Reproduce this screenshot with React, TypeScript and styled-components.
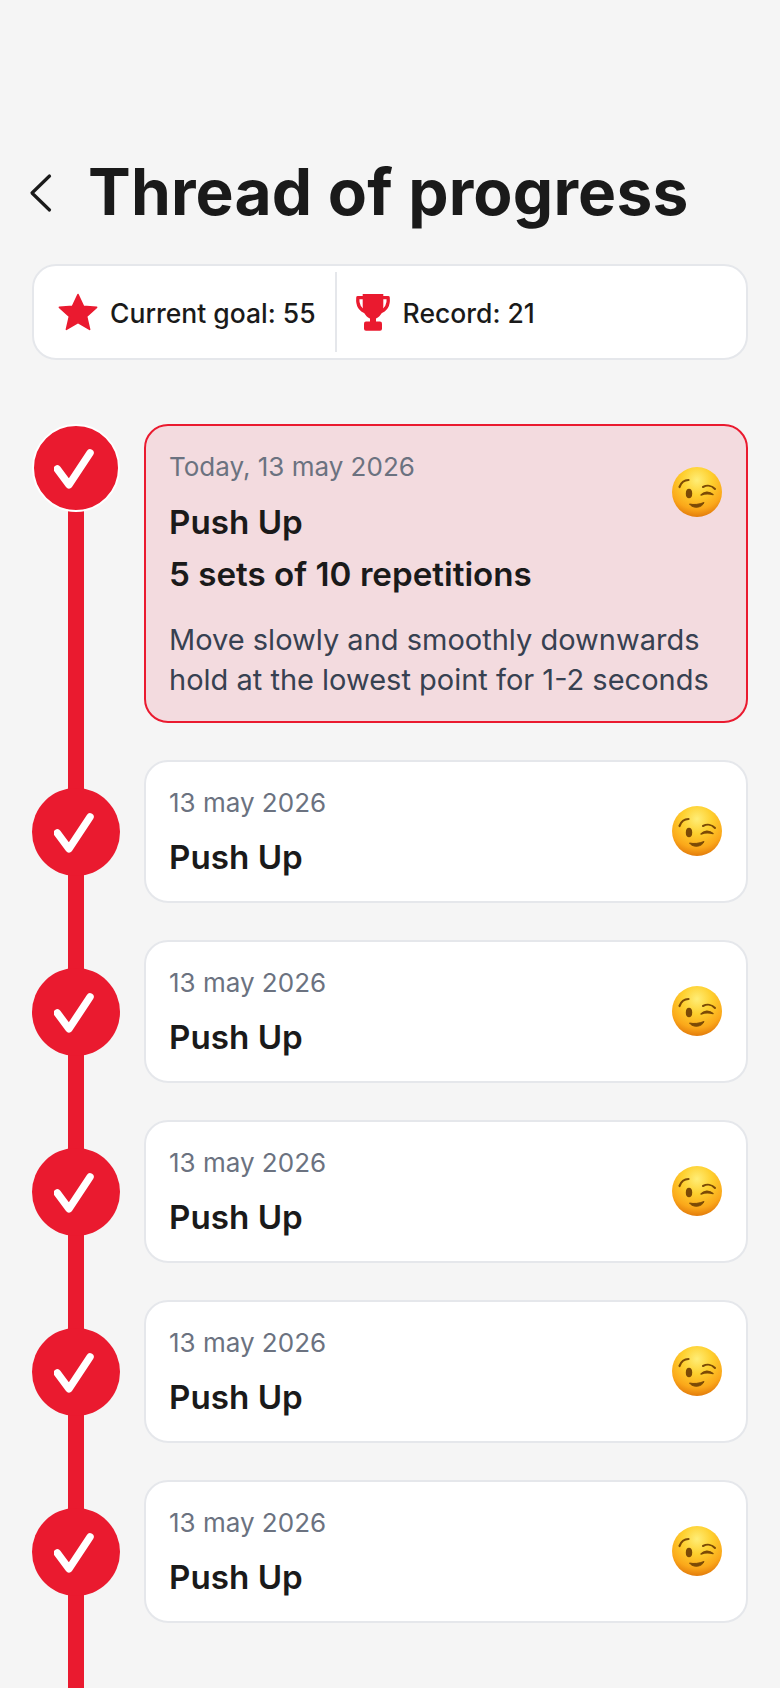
import React from "react";
import styled, { createGlobalStyle } from "styled-components";

const RED = "#ea1a2f";

const Global = createGlobalStyle`
  html, body { margin: 0; padding: 0; background: #f5f5f5; }
  body { font-family: Inter, "Liberation Sans", sans-serif; color: #1a1a1a; }
  * { box-sizing: border-box; }
`;

const Page = styled.div`
  width: 780px;
  height: 1688px;
  overflow: hidden;
  padding: 153px 32px 0;
  display: flex;
  flex-direction: column;
`;

const Header = styled.header`
  display: flex;
  align-items: center;
  height: 79px;
  gap: 35px;
`;

const BackButton = styled.button`
  display: flex;
  width: 24px;
  margin-left: -3px;
  padding: 0;
  border: 0;
  background: none;
  color: #1a1a1a;
`;

const Title = styled.h1`
  margin: 0;
  padding-bottom: 2px;
  font-size: 64px;
  line-height: 77px;
  font-weight: 700;
  letter-spacing: 0.18px;
  white-space: nowrap;
`;

const StatsBar = styled.section`
  margin-top: 32px;
  height: 96px;
  background: #fff;
  border: 2px solid #e5e7eb;
  border-radius: 24px;
  display: flex;
  align-items: center;
  padding: 6px 0;
`;

const Stat = styled.div`
  height: 100%;
  display: flex;
  align-items: center;
  gap: 12px;
  padding: 0 19px 0 24px;
  & + & {
    border-left: 2px solid #e5e7eb;
    padding-left: 18px;
  }
`;

const StatLabel = styled.span`
  font-size: 26.5px;
  font-weight: 500;
  white-space: nowrap;
  padding-top: 1px;
`;

const Timeline = styled.ol`
  position: relative;
  list-style: none;
  margin: 64px 0 0;
  padding: 0;
  display: flex;
  flex-direction: column;
  gap: 37px;
  flex: 1;
  &::before {
    content: "";
    position: absolute;
    left: 36px;
    top: 44px;
    bottom: 0;
    width: 16px;
    background: ${RED};
  }
`;

const Row = styled.li`
  position: relative;
  display: grid;
  grid-template-columns: 112px 1fr;
  align-items: center;
`;

const MarkerCell = styled.div<{ $current?: boolean }>`
  display: flex;
  justify-content: center;
  width: 88px;
  align-self: ${(p) => (p.$current ? "start" : "center")};
`;

const Marker = styled.div<{ $current?: boolean }>`
  width: 88px;
  height: 88px;
  border-radius: 50%;
  background: ${RED};
  border: ${(p) => (p.$current ? "2px solid #fff" : "0")};
  display: flex;
  align-items: center;
  justify-content: center;
`;

const Card = styled.article<{ $current?: boolean }>`
  position: relative;
  min-height: 143px;
  border-radius: 24px;
  border: 2px solid ${(p) => (p.$current ? RED : "#e5e7eb")};
  background: ${(p) => (p.$current ? "#f3dbdf" : "#fff")};
  padding: 25px 22px ${(p) => (p.$current ? "21px" : "0")} 23px;
`;

const CardDate = styled.div`
  font-size: 26px;
  line-height: 32px;
  font-weight: 400;
  color: #6b7280;
`;

const CardTitle = styled.div<{ $current?: boolean }>`
  font-size: 33.2px;
  line-height: 52px;
  font-weight: 600;
  margin-top: ${(p) => (p.$current ? 13 : 12)}px;
  color: #1a1a1a;
`;

const Note = styled.p`
  margin: 20px 0 0;
  font-size: 29px;
  line-height: 40px;
  color: #374151;
  white-space: nowrap;
`;

const EmojiSlot = styled.div<{ $current?: boolean }>`
  position: absolute;
  right: 23px;
  top: ${(p) => (p.$current ? 40 : 43)}px;
  width: 52px;
  height: 52px;
`;

const Check = () => (
  <svg width="44" height="44" viewBox="0 0 44 44" fill="none">
    <path d="M3.3 23 L15 38.7 L36 7" stroke="#fff" strokeWidth="7.5" strokeLinecap="round" strokeLinejoin="round" />
  </svg>
);

const Back = () => (
  <svg width="24" height="40" viewBox="0 0 24 40" fill="none">
    <path d="M20.5 3 L3 20 L20.5 37" stroke="currentColor" strokeWidth="3.2" strokeLinecap="round" strokeLinejoin="round" />
  </svg>
);

const Star = () => (
  <svg width="40" height="38" viewBox="0 0 40 38">
    <path
      d="M20 1.5 L25.4 13.2 L38.6 14.4 L28.6 23.4 L31.6 36.4 L20 29.6 L8.4 36.4 L11.4 23.4 L1.4 14.4 L14.6 13.2 Z"
      fill={RED}
      stroke={RED}
      strokeWidth="1.6"
      strokeLinejoin="round"
    />
  </svg>
);

const Trophy = () => (
  <svg width="36" height="38" viewBox="0 0 36 38" fill="none">
    <path d="M7.7 1 H28.3 V13 C28.3 21 23.5 24.5 21 25.4 V29 H15 V25.4 C12.5 24.5 7.7 21 7.7 13 Z" fill={RED} />
    <path d="M8 4.6 H2.8 C2.2 11.5 4.5 17 11.5 19 M28 4.6 H33.2 C33.8 11.5 31.5 17 24.5 19" stroke={RED} strokeWidth="3.2" strokeLinejoin="round" />
    <rect x="9" y="28.6" width="18" height="9.2" rx="2" fill={RED} />
  </svg>
);

const WinkEmoji = ({ id }: { id: string }) => (
  <svg width="52" height="52" viewBox="0 0 52 52">
    <defs>
      <radialGradient id={id} cx="50%" cy="26%" r="74%">
        <stop offset="0" stopColor="#ffee78" />
        <stop offset="0.4" stopColor="#fed02f" />
        <stop offset="0.78" stopColor="#fba81a" />
        <stop offset="1" stopColor="#e37c0c" />
      </radialGradient>
    </defs>
    <circle cx="26" cy="26" r="25" fill={`url(#${id})`} />
    <ellipse cx="18" cy="27.5" rx="3.2" ry="4.8" fill="#7b4a06" />
    <path d="M8.5 21 C10.5 15.5 14 14 17.5 14" stroke="#7b4a06" strokeWidth="2.2" fill="none" strokeLinecap="round" />
    <path d="M32 21 C36 19 41 19.5 44 23" stroke="#7b4a06" strokeWidth="2" fill="none" strokeLinecap="round" />
    <path d="M30 29 C33 25.5 38 25 42 28.5 C38 27.5 34 27.5 30 29 Z" fill="#7b4a06" stroke="#7b4a06" strokeWidth="1.4" strokeLinejoin="round" />
    <path d="M18.5 38 C23 39 28 38.5 33 36.5 C31 42 22 43 18.5 38 Z" fill="#7b4a06" stroke="#7b4a06" strokeWidth="1" strokeLinejoin="round" />
  </svg>
);

const entries = [1, 2, 3, 4, 5];

export default function App() {
  return (
    <Page>
      <Global />
      <Header>
        <BackButton aria-label="Back">
          <Back />
        </BackButton>
        <Title>Thread of progress</Title>
      </Header>
      <StatsBar>
        <Stat>
          <Star />
          <StatLabel>Current goal: 55</StatLabel>
        </Stat>
        <Stat>
          <Trophy />
          <StatLabel>Record: 21</StatLabel>
        </Stat>
      </StatsBar>
      <Timeline>
        <Row>
          <MarkerCell $current>
            <Marker $current>
              <Check />
            </Marker>
          </MarkerCell>
          <Card $current>
            <CardDate>Today, 13 may 2026</CardDate>
            <CardTitle $current>
              Push Up
              <br />5 sets of 10 repetitions
            </CardTitle>
            <Note>
              Move slowly and smoothly downwards
              <br />
              hold at the lowest point for 1-2 seconds
            </Note>
            <EmojiSlot $current>
              <WinkEmoji id="wink-0" />
            </EmojiSlot>
          </Card>
        </Row>
        {entries.map((n) => (
          <Row key={n}>
            <MarkerCell>
              <Marker>
                <Check />
              </Marker>
            </MarkerCell>
            <Card>
              <CardDate>13 may 2026</CardDate>
              <CardTitle>Push Up</CardTitle>
              <EmojiSlot>
                <WinkEmoji id={`wink-${n}`} />
              </EmojiSlot>
            </Card>
          </Row>
        ))}
      </Timeline>
    </Page>
  );
}
